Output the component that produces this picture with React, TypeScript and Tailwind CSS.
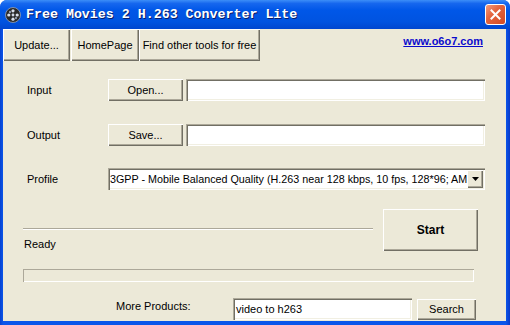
import React from "react";

const raised =
  "bg-[#ece9d8] shadow-[inset_1px_1px_0_#ffffff,inset_-1px_-1px_0_#716f64,inset_-2px_-2px_0_#aca899]";
const sunken =
  "bg-white shadow-[inset_1px_1px_0_#aca899,inset_2px_2px_0_#716f64,inset_-1px_-1px_0_#ffffff,inset_-2px_-2px_0_#f1efe2]";

function TitleIcon() {
  return (
    <svg width="16" height="16" viewBox="0 0 16 16">
      <circle cx="8" cy="8" r="7.5" fill="#2a2a2a" stroke="#9aa4b8" strokeWidth="0.8" />
      <circle cx="8" cy="8" r="1.4" fill="#cfd6e4" />
      <circle cx="8" cy="3.8" r="1.6" fill="#d9dfea" />
      <circle cx="8" cy="12.2" r="1.6" fill="#d9dfea" />
      <circle cx="3.8" cy="8" r="1.6" fill="#d9dfea" />
      <circle cx="12.2" cy="8" r="1.6" fill="#d9dfea" />
      <circle cx="5" cy="5" r="1.2" fill="#8d96a8" />
      <circle cx="11" cy="11" r="1.2" fill="#8d96a8" />
    </svg>
  );
}

export default function App() {
  return (
    <div
      className="w-[510px] h-[325px] bg-white overflow-hidden"
      style={{ fontFamily: '"Liberation Sans", Arial, sans-serif' }}
    >
      <div className="w-[510px] h-[325px] flex flex-col rounded-t-[7px] overflow-hidden bg-[#0a4fe0]">
        {/* Title bar */}
        <div className="h-[29px] shrink-0 flex items-center bg-[linear-gradient(to_bottom,#3c8ef8_0%,#1667ee_12%,#0057e8_35%,#0053e0_75%,#0046cf_100%)]">
          <div className="ml-[5px] w-[16px] h-[16px] flex">
            <TitleIcon />
          </div>
          <div
            className="ml-[5px] text-white font-bold text-[13.3px] leading-none whitespace-nowrap [text-shadow:1px_1px_0_#0a1e6a]"
            style={{ fontFamily: '"Liberation Mono", "Courier New", monospace' }}
          >
            Free Movies 2 H.263 Converter Lite
          </div>
          <div className="flex-1" />
          <div className="mr-[4px] w-[21px] h-[21px] rounded-[3px] border border-white bg-[linear-gradient(135deg,#f29c7e_0%,#e4653f_40%,#d34a22_100%)] flex items-center justify-center">
            <svg width="11" height="11" viewBox="0 0 11 11">
              <path d="M1.5 1.5 L9.5 9.5 M9.5 1.5 L1.5 9.5" stroke="white" strokeWidth="2" strokeLinecap="square" />
            </svg>
          </div>
        </div>

        {/* Body with frame */}
        <div className="flex-1 flex pl-[3px] pr-[4px] pb-[4px] bg-[linear-gradient(to_right,#0842d0_0px,#0a55ea_3px,#0a55ea_calc(100%-4px),#0838c8_100%)]">
          <div className="flex-1 bg-[#ece9d8] flex flex-col text-[11px] text-black">
            {/* Toolbar */}
            <div className="h-[32px] flex items-stretch">
              <div className={`${raised} w-[67px] flex items-center justify-center`}>Update...</div>
              <div className={`${raised} w-[68px] ml-[1px] flex items-center justify-center`}>HomePage</div>
              <div className={`${raised} w-[121px] flex items-center justify-center whitespace-nowrap`}>
                Find other tools for free
              </div>
              <div className="flex-1" />
              <div className="self-center mr-[23px] text-[#0a0acd] font-bold underline text-[11px] mt-[-7px]">
                www.o6o7.com
              </div>
            </div>

            {/* Rows */}
            <div className="mt-[18px] pl-[24px] flex flex-col">
              <div className="flex items-center h-[22px]">
                <div className="w-[81px]">Input</div>
                <div className={`${raised} w-[75px] h-[22px] flex items-center justify-center`}>Open...</div>
                <div className={`${sunken} ml-[3px] w-[299px] h-[22px]`} />
              </div>
              <div className="flex items-center h-[22px] mt-[23px]">
                <div className="w-[81px]">Output</div>
                <div className={`${raised} w-[75px] h-[22px] flex items-center justify-center`}>Save...</div>
                <div className={`${sunken} ml-[3px] w-[299px] h-[22px]`} />
              </div>
              <div className="flex items-center h-[22px] mt-[22px]">
                <div className="w-[81px]">Profile</div>
                <div className={`${sunken} w-[377px] h-[22px] flex items-center pl-[2px] pr-[2px]`}>
                  <div className="flex-1 overflow-hidden whitespace-nowrap text-[10.75px]">
                    3GPP - Mobile Balanced Quality (H.263 near 128 kbps, 10 fps, 128*96; AMR 12.2 kbps)
                  </div>
                  <div className={`${raised} w-[16px] h-[18px] flex items-center justify-center`}>
                    <svg width="7" height="4" viewBox="0 0 7 4">
                      <path d="M0 0 H7 L3.5 4 Z" fill="black" />
                    </svg>
                  </div>
                </div>
              </div>
            </div>

            {/* Start row */}
            <div className="mt-[19px] h-[42px] flex pl-[20px] pr-[28px]">
              <div className="flex-1 flex flex-col pt-[19px] pr-[10px]">
                <div className="h-[2px] border-t border-[#aca899] border-b border-b-white" />
                <div className="mt-[8px] ml-[1px] leading-[13px]">Ready</div>
              </div>
              <div className={`${raised} w-[95px] h-[42px] flex items-center justify-center font-bold text-[12px]`}>
                Start
              </div>
            </div>

            {/* Progress */}
            <div className="mt-[18px] ml-[20px] w-[451px] h-[13px] shadow-[inset_1px_1px_0_#aca899,inset_-1px_-1px_0_#ffffff]" />

            {/* Bottom row */}
            <div className="mt-[16px] flex items-center">
              <div className="ml-[113px] w-[117px] mb-[5px]">More Products:</div>
              <div className={`${sunken} w-[179px] h-[22px] flex items-center pl-[3px]`}>video to h263</div>
              <div className={`${raised} ml-[5px] w-[59px] h-[21px] flex items-center justify-center`}>Search</div>
            </div>
          </div>
        </div>
      </div>
    </div>
  );
}
